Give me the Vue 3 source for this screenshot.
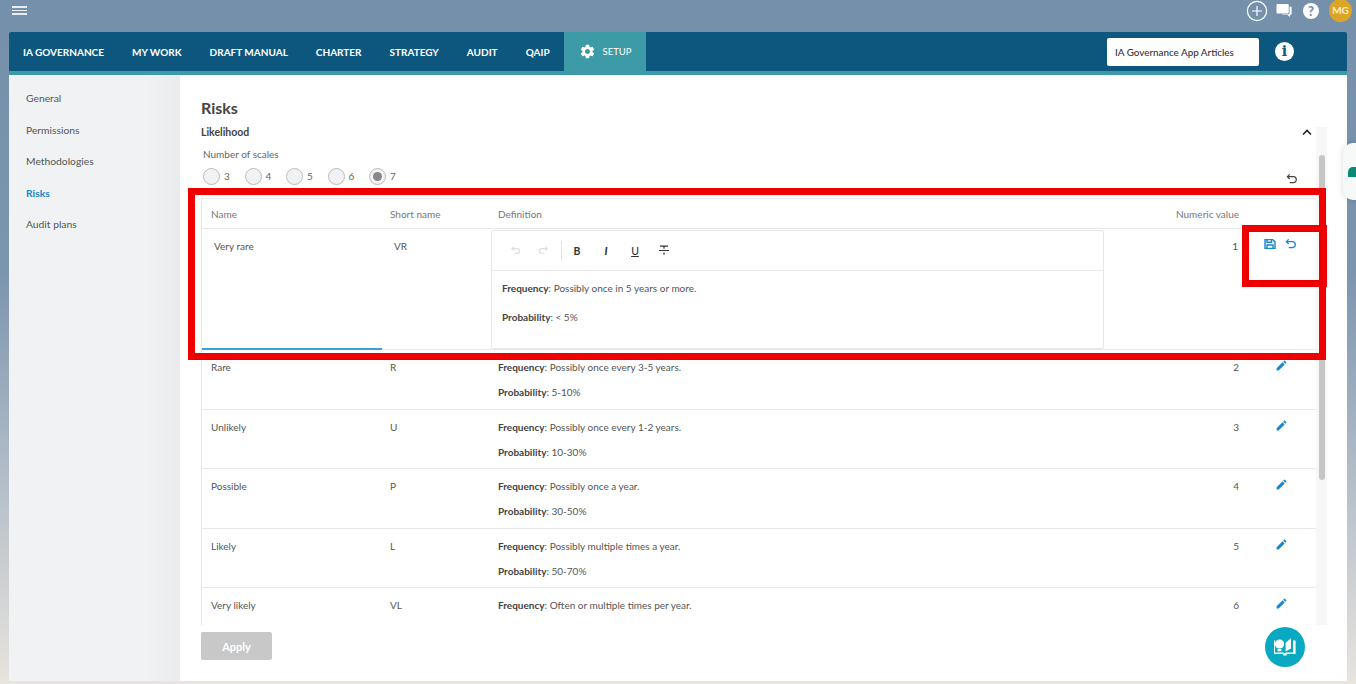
<script setup>
import { ref } from 'vue'

const menu = ['General', 'Permissions', 'Methodologies', 'Risks', 'Audit plans']
const navItems = ['IA GOVERNANCE', 'MY WORK', 'DRAFT MANUAL', 'CHARTER', 'STRATEGY', 'AUDIT', 'QAIP']
const scales = [3, 4, 5, 6, 7]

// the last row runs under the fold, so only its first line is visible
const rows = ref([
  { name: 'Rare', short: 'R', freq: 'Possibly once every 3-5 years.', prob: '5-10%', value: 2 },
  { name: 'Unlikely', short: 'U', freq: 'Possibly once every 1-2 years.', prob: '10-30%', value: 3 },
  { name: 'Possible', short: 'P', freq: 'Possibly once a year.', prob: '30-50%', value: 4 },
  { name: 'Likely', short: 'L', freq: 'Possibly multiple times a year.', prob: '50-70%', value: 5 },
  { name: 'Very likely', short: 'VL', freq: 'Often or multiple times per year.', prob: '', value: 6 }
])
</script>

<template>
  <div class="page">
    <header class="topbar">
      <div class="burger"><span></span><span></span><span></span></div>
      <div class="top-icons">
        <svg class="plus" width="22" height="22" viewBox="0 0 22 22" fill="none" stroke="#fff" stroke-width="1.2"><circle cx="11" cy="11" r="9.6"/><path d="M11 6v10M6 11h10"/></svg>
        <svg width="16" height="15" viewBox="0 0 16 15" fill="#fff"><path d="M1.5 1h10.2a1 1 0 0 1 1 1v7.4a1 1 0 0 1-1 1H1.5a1 1 0 0 1-1-1V2a1 1 0 0 1 1-1z"/><path d="M13.6 3.4h1a1 1 0 0 1 1 1v6.4a1 1 0 0 1-1 1h-.6V14l-2.6-2.2H6.4v-.6h6.2a1 1 0 0 0 1-1z"/></svg>
        <div class="help">?</div>
        <div class="avatar">MG</div>
      </div>
    </header>

    <nav class="nav">
      <a v-for="item in navItems" :key="item" class="nav-item">{{ item }}</a>
      <a class="nav-item setup">
        <svg width="17" height="17" viewBox="0 0 24 24" fill="#fff"><path d="M19.14 12.94c.04-.3.06-.61.06-.94 0-.32-.02-.64-.07-.94l2.03-1.58a.49.49 0 0 0 .12-.61l-1.92-3.32a.488.488 0 0 0-.59-.22l-2.39.96c-.5-.38-1.03-.7-1.62-.94l-.36-2.54a.484.484 0 0 0-.48-.41h-3.84c-.24 0-.43.17-.47.41l-.36 2.54c-.59.24-1.13.57-1.62.94l-2.39-.96c-.22-.08-.47 0-.59.22L2.74 8.87c-.12.21-.08.47.12.61l2.03 1.58c-.05.3-.09.63-.09.94s.02.64.07.94l-2.03 1.58a.49.49 0 0 0-.12.61l1.92 3.32c.12.22.37.29.59.22l2.39-.96c.5.38 1.03.7 1.62.94l.36 2.54c.05.24.24.41.48.41h3.84c.24 0 .44-.17.47-.41l.36-2.54c.59-.24 1.13-.56 1.62-.94l2.39.96c.22.08.47 0 .59-.22l1.92-3.32c.12-.22.07-.47-.12-.61l-2.01-1.58zM12 15.6c-1.98 0-3.6-1.62-3.6-3.6s1.62-3.6 3.6-3.6 3.6 1.62 3.6 3.6-1.62 3.6-3.6 3.6z"/></svg>
        SETUP
      </a>
      <div class="nav-right">
        <div class="articles">IA Governance App Articles</div>
        <div class="info">i</div>
      </div>
    </nav>

    <div class="body">
      <aside class="sidebar">
        <a v-for="m in menu" :key="m" class="side-link" :class="{ active: m === 'Risks' }">{{ m }}</a>
      </aside>

      <main class="content">
        <h1 class="title">Risks</h1>
        <div class="scroll-area">
          <div class="scroll-inner">
            <div class="section-head">
              <span>Likelihood</span>
              <svg width="10" height="7" viewBox="0 0 10 7" fill="none" stroke="#222" stroke-width="1.6"><path d="M1 5.5l4-4 4 4"/></svg>
            </div>
            <div class="scales-label">Number of scales</div>
            <div class="scales-row">
              <label v-for="s in scales" :key="s" class="radio">
                <span class="circle" :class="{ on: s === 7 }"></span>{{ s }}
              </label>
              <svg class="reset" width="11" height="11" viewBox="0 0 12 12" fill="none" stroke="#444" stroke-width="1.3"><path d="M4 1.5L1.5 4 4 6.5M1.5 4H8a2.7 2.7 0 0 1 0 6.5H4"/></svg>
            </div>

            <div class="table">
              <div class="row head">
                <div>Name</div>
                <div>Short name</div>
                <div>Definition</div>
                <div class="num">Numeric value</div>
                <div></div>
              </div>

              <div class="row editing">
                <div class="edit-name">Very rare</div>
                <div class="edit-short">VR</div>
                <div class="editor">
                  <div class="toolbar">
                    <svg class="faint" width="11" height="11" viewBox="0 0 12 12" fill="none" stroke="#ddd" stroke-width="1.2"><path d="M4 2L2 4l2 2M2 4h6a2.5 2.5 0 0 1 0 5H5"/></svg>
                    <svg class="faint" width="11" height="11" viewBox="0 0 12 12" fill="none" stroke="#ddd" stroke-width="1.2"><path d="M8 2l2 2-2 2M10 4H4a2.5 2.5 0 0 0 0 5h3"/></svg>
                    <span class="divider"></span>
                    <span class="tool bold">B</span>
                    <span class="tool italic">I</span>
                    <span class="tool under">U</span>
                    <svg class="strike" width="10" height="11" viewBox="0 0 10 11" fill="none" stroke="#333" stroke-width="1.2"><path d="M1 1.2h8M5 1.2v2.6M0 5.5h10M5 7.4v2.4"/></svg>
                  </div>
                  <div class="editor-text">
                    <p><b>Frequency</b>: Possibly once in 5 years or more.</p>
                    <p><b>Probability</b>: &lt; 5%</p>
                  </div>
                </div>
                <div class="num edit-num">1</div>
                <div class="edit-actions">
                  <svg width="12" height="12" viewBox="0 0 12 12" fill="none" stroke="#1b87c9" stroke-width="1.4"><path d="M1 1.6h7.7L11 3.9v6.5H1z"/><path d="M3 1.6v2.6h4.6V1.6M3 10.4V7h6v3.4"/></svg>
                  <svg width="11" height="11" viewBox="0 0 12 12" fill="none" stroke="#1b87c9" stroke-width="1.4"><path d="M4 1.5L1.5 4 4 6.5M1.5 4H8a2.7 2.7 0 0 1 0 6.5H4"/></svg>
                </div>
                <span class="focus-line"></span>
              </div>

              <div v-for="r in rows" :key="r.value" class="row item">
                <div>{{ r.name }}</div>
                <div>{{ r.short }}</div>
                <div class="def">
                  <p><b>Frequency</b>: {{ r.freq }}</p>
                  <p v-if="r.prob"><b>Probability</b>: {{ r.prob }}</p>
                </div>
                <div class="num">{{ r.value }}</div>
                <div class="pencil">
                  <svg width="13" height="13" viewBox="0 0 24 24" fill="#1b87c9"><path d="M3 17.25V21h3.75L17.81 9.94l-3.75-3.75L3 17.25zM20.71 7.04a1 1 0 0 0 0-1.41l-2.34-2.34a1 1 0 0 0-1.41 0l-1.83 1.83 3.75 3.75 1.83-1.83z"/></svg>
                </div>
              </div>
            </div>
          </div>
          <div class="scrollbar"><div class="thumb"></div></div>
        </div>
        <div class="footer">
          <button class="apply">Apply</button>
        </div>
      </main>
    </div>

    <div class="side-tab"><span class="tab-icon"></span></div>

    <div class="fab">
      <svg width="26" height="22" viewBox="0 0 26 22" fill="#fff">
        <circle cx="7.5" cy="8" r="4.6"/>
        <rect x="5.6" y="13" width="3.8" height="2.2"/>
        <path d="M13.6 15.6V7l5.4-5v10.5z"/>
        <path d="M21 4.5h2.6V18H14.8v1.4h-3.6V18H2V4.5h1v12h8.8l1 1 1-.9 7.2-.1z"/>
      </svg>
    </div>

    <!-- red annotation boxes from the source picture -->
    <div class="mark mark-row"></div>
    <div class="mark mark-actions"></div>
  </div>
</template>

<style>
html, body {
  margin: 0;
  overflow: hidden;
}
</style>

<style scoped>
.page {
  position: relative;
  width: 1356px;
  height: 684px;
  overflow: hidden;
  display: flex;
  flex-direction: column;
  background: linear-gradient(180deg, #7590ab 0%, #7c95ae 40%, #bcc4cc 75%, #e8e4de 100%);
  font-family: Lato, "Open Sans", sans-serif;
  color: #555;
  font-size: 10px;
}

.topbar {
  height: 32px;
  flex: none;
  display: flex;
  justify-content: space-between;
  align-items: flex-start;
  padding: 0 4px 0 12px;
}

.burger {
  width: 15px;
  margin-top: 6px;
  display: flex;
  flex-direction: column;
  gap: 2px;
}

.burger span {
  height: 1.5px;
  background: #e8edf2;
}

.top-icons {
  display: flex;
  align-items: center;
  gap: 11px;
  height: 21px;
}

.plus {
  margin-right: -3px;
}

.help {
  width: 16px;
  height: 16px;
  border-radius: 50%;
  background: #fff;
  color: #7590ab;
  font-size: 13px;
  font-weight: 900;
  line-height: 16px;
  text-align: center;
}

.avatar {
  width: 23px;
  height: 23px;
  border-radius: 50%;
  background: #dba527;
  color: #fbeec9;
  font-size: 10px;
  font-weight: 700;
  line-height: 22px;
  text-align: center;
  margin-left: -1px;
}

.nav {
  flex: none;
  height: 39px;
  margin: 0 9px;
  display: flex;
  align-items: stretch;
  background: #0d577f;
  border-bottom: 4px solid #3d9ba8;
  border-radius: 2px 2px 0 0;
}

.nav-item {
  display: flex;
  align-items: center;
  padding: 0 14px;
  color: #fff;
  font-size: 10px;
  font-weight: 700;
  white-space: nowrap;
}

.nav-item.setup {
  background: #3d9ba8;
  padding: 0 14px 4px 15px;
  gap: 7px;
  font-weight: 400;
  font-size: 9.5px;
  margin-bottom: -4px;
}

.nav-right {
  margin-left: auto;
  display: flex;
  align-items: center;
  gap: 16px;
  padding-right: 53px;
}

.articles {
  width: 152px;
  height: 28px;
  box-sizing: border-box;
  padding-left: 8px;
  background: #fff;
  border-radius: 2px;
  color: #333;
  font-size: 9.85px;
  font-weight: 500;
  line-height: 28px;
}

.info {
  width: 19px;
  height: 19px;
  border-radius: 50%;
  background: #fff;
  color: #0d577f;
  font-family: "DejaVu Serif", serif;
  font-size: 14px;
  font-weight: 700;
  line-height: 19px;
  text-align: center;
}

.body {
  flex: 1;
  min-height: 0;
  display: flex;
  margin: 0 9px 3px;
  background: #fff;
}

.sidebar {
  width: 171px;
  flex: none;
  box-sizing: border-box;
  padding-top: 17px;
  display: flex;
  flex-direction: column;
  gap: 18px;
  font-size: 10.3px;
  background: linear-gradient(90deg, #f0f2f4 80%, #eaebed 100%);
}

.side-link {
  padding-left: 17px;
  height: 13.5px;
  line-height: 13.5px;
  color: #555;
}

.side-link.active {
  color: #1b87c9;
  font-weight: 700;
}

.content {
  flex: 1;
  min-width: 0;
  display: flex;
  flex-direction: column;
  padding-left: 21px;
}

.title {
  margin: 23px 0 0;
  height: 29px;
  font-size: 16px;
  line-height: 20px;
  font-weight: 700;
  color: #444;
}

.scroll-area {
  height: 498px;
  display: flex;
  margin-right: 20px;
}

.scroll-inner {
  flex: 1;
  min-width: 0;
  overflow: hidden;
}

.scrollbar {
  width: 11px;
  flex: none;
  padding-top: 28px;
  box-sizing: border-box;
  background: #f7f7f7;
}

.thumb {
  width: 6px;
  height: 325px;
  margin-left: 3px;
  border-radius: 3px;
  background: #c6c6c6;
}

.section-head {
  display: flex;
  justify-content: space-between;
  align-items: center;
  height: 10px;
  padding-right: 4px;
  font-size: 10.5px;
  font-weight: 700;
  color: #444;
}

.scales-label {
  margin: 9px 0 0 2px;
  height: 16px;
  line-height: 16px;
  font-size: 10px;
  color: #666;
}

.scales-row {
  display: flex;
  align-items: center;
  margin-top: 5px;
  padding-left: 2px;
  height: 18px;
}

.radio {
  display: flex;
  align-items: center;
  gap: 4px;
  width: 41.5px;
  font-size: 10px;
  color: #666;
}

.circle {
  width: 15px;
  height: 15px;
  border: 1px solid #bbb;
  border-radius: 50%;
  background: #f0f2f4;
  position: relative;
}

.circle.on::after {
  content: '';
  position: absolute;
  inset: 3px;
  border-radius: 50%;
  background: #888;
}

.reset {
  margin-left: auto;
  margin-right: 19px;
  margin-top: 5px;
}

.table {
  margin-top: 13px;
  border-left: 1px solid #e8e8e8;
  border-top: 1px solid #e8e8e8;
}

.row {
  display: grid;
  grid-template-columns: 189px 108px 1fr 120px 77px;
  border-bottom: 1px solid #e8e8e8;
}

.row.head {
  height: 30px;
  box-sizing: border-box;
  align-items: center;
  padding-left: 9px;
  grid-template-columns: 179px 108px 1fr 120px 77px;
  color: #777;
}

.row.item {
  height: 59.5px;
  box-sizing: border-box;
  padding: 10px 0 0 9px;
  grid-template-columns: 179px 108px 1fr 120px 77px;
  line-height: 14px;
  color: #555;
}

.def p {
  margin: 0 0 11px;
}

.def b,
.editor-text b {
  font-weight: 700;
  color: #444;
}

.num {
  text-align: right;
}

.pencil {
  padding-left: 36px;
  margin-top: -1px;
}

.row.editing {
  position: relative;
  height: 121px;
  box-sizing: border-box;
  grid-template-columns: 192px 97px 613px 1fr 75px;
}

.edit-name {
  padding: 11px 0 0 12px;
}

.edit-short {
  padding-top: 11px;
}

.editor {
  height: 119px;
  margin-top: 1px;
  box-sizing: border-box;
  border: 1px solid #e8e8e8;
  border-radius: 2px;
}

.toolbar {
  height: 40px;
  box-sizing: border-box;
  display: flex;
  align-items: center;
  padding-left: 18px;
  border-bottom: 1px solid #e8e8e8;
}

.faint {
  margin-right: 17px;
}

.divider {
  width: 1px;
  height: 20px;
  background: #e4e4e4;
  margin: 0 10px 0 -5px;
}

.tool {
  width: 10px;
  margin-right: 19px;
  text-align: center;
  font-size: 10.5px;
  color: #333;
  font-weight: 700;
}

.tool.italic {
  font-style: italic;
  font-weight: 900;
}

.tool.under {
  text-decoration: underline;
  font-weight: 500;
}

.editor-text {
  padding: 10px 10px 0;
  line-height: 14px;
}

.editor-text p {
  margin: 0 0 15px;
}

.edit-num {
  padding: 11px 3px 0 0;
}

.edit-actions {
  display: flex;
  gap: 9px;
  padding: 9px 0 0 23px;
  align-items: flex-start;
}

.focus-line {
  position: absolute;
  left: 0;
  bottom: -1px;
  width: 180px;
  height: 2px;
  background: #3a9fdc;
}

.footer {
  flex: 1;
  padding-top: 7px;
}

.apply {
  display: block;
  width: 71px;
  height: 28px;
  border: 0;
  border-radius: 2px;
  background: #c8c8c8;
  color: #fff;
  font-family: inherit;
  font-size: 11px;
  font-weight: 700;
}

.side-tab {
  position: absolute;
  left: 1343px;
  top: 143px;
  width: 20px;
  height: 57px;
  border-radius: 10px 0 0 10px;
  background: #f7f8f8;
  box-shadow: 0 0 6px rgba(0, 0, 0, 0.15);
}

.tab-icon {
  position: absolute;
  left: 5px;
  top: 24px;
  width: 12px;
  height: 10px;
  border-radius: 5px 5px 0 0;
  background: #0a8a72;
}

.fab {
  position: absolute;
  left: 1265px;
  top: 627px;
  width: 40px;
  height: 40px;
  border-radius: 50%;
  background: #0aa9c2;
  display: flex;
  align-items: center;
  justify-content: center;
}

.mark {
  position: absolute;
  box-sizing: border-box;
  border: 7px solid #ee0000;
  pointer-events: none;
}

.mark-row {
  left: 188px;
  top: 188px;
  width: 1138px;
  height: 172px;
}

.mark-actions {
  left: 1242px;
  top: 225px;
  width: 85px;
  height: 62px;
}
</style>
